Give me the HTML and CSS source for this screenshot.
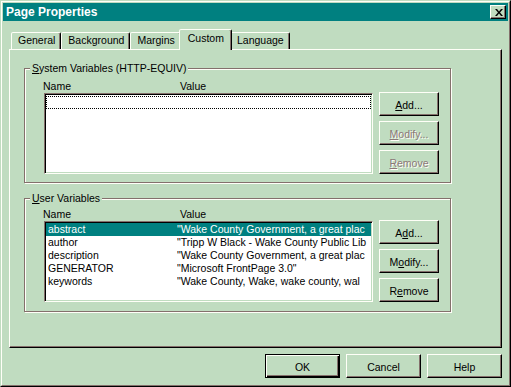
FILE: index.html
```html
<!DOCTYPE html>
<html lang="en">
<head>
  <meta charset="UTF-8" />
  <title>Page Properties</title>
  <link rel="stylesheet" href="styles.css">
</head>
<body>

<div class="window">
  <div class="frame">
    <!-- Title bar -->
    <div class="titlebar">
      <span class="title">Page Properties</span>
      <button class="close-btn">
        <svg width="8" height="7" viewBox="0 0 8 7"><path d="M0 0h2l2 2.4L6 0h2L5 3.5 8 7H6L4 4.6 2 7H0l3-3.5z" fill="#000"/></svg>
      </button>
    </div>

    <!-- Tabs -->
    <div class="tabs">
      <div class="tab">General</div>
      <div class="tab">Background</div>
      <div class="tab">Margins</div>
      <div class="tab active">Custom</div>
      <div class="tab">Language</div>
    </div>

    <div class="tab-panel">
      <!-- System variables -->
      <div class="group group-system">
        <span class="group-label"><u>S</u>ystem Variables (HTTP-EQUIV)</span>
        <div class="group-body">
          <div class="col-head"><span>Name</span><span>Value</span></div>
          <div class="listbox">
            <div class="row focus"></div>
          </div>
          <div class="side-buttons">
            <button class="btn"><u>A</u>dd...</button>
            <button class="btn disabled"><u>M</u>odify...</button>
            <button class="btn disabled"><u>R</u>emove</button>
          </div>
        </div>
      </div>

      <!-- User variables -->
      <div class="group group-user">
        <span class="group-label"><u>U</u>ser Variables</span>
        <div class="group-body">
          <div class="col-head"><span>Name</span><span>Value</span></div>
          <div class="listbox">
            <div class="row selected"><span>abstract</span><span>"Wake County Government, a great plac</span></div>
            <div class="row"><span>author</span><span>"Tripp W Black - Wake County Public Lib</span></div>
            <div class="row"><span>description</span><span>"Wake County Government, a great plac</span></div>
            <div class="row"><span>GENERATOR</span><span>"Microsoft FrontPage 3.0"</span></div>
            <div class="row"><span>keywords</span><span>"Wake County, Wake, wake county, wal</span></div>
          </div>
          <div class="side-buttons">
            <button class="btn">A<u>d</u>d...</button>
            <button class="btn">M<u>o</u>dify...</button>
            <button class="btn">R<u>e</u>move</button>
          </div>
        </div>
      </div>
    </div>

    <!-- Dialog buttons -->
    <div class="dialog-buttons">
      <button class="btn wide default">OK</button>
      <button class="btn wide">Cancel</button>
      <button class="btn wide">Help</button>
    </div>
  </div>
</div>

</body>
</html>
```

FILE: styles.css
```css
/* Base */
* { margin: 0; padding: 0; box-sizing: border-box; }
body {
  font-family: "Liberation Sans", Arial, sans-serif;
  font-size: 10.5px;
  color: #000;
  background: #c0dcc0;
}

/* Window frame */
.window {
  width: 511px;
  height: 387px;
  background: #c0dcc0;
  border: 1px solid;
  border-color: #c0dcc0 #000 #000 #c0dcc0;
}

.frame {
  height: 100%;
  display: flex;
  flex-direction: column;
  border: 1px solid;
  border-color: #fffff8 #84706c #84706c #fffff8;
  padding: 1px;
}

/* Title bar */
.titlebar {
  height: 18px;
  background: #008080;
  display: flex;
  align-items: center;
  justify-content: space-between;
  padding: 0 2px 0 2px;
}

.title {
  color: #fff;
  font-weight: bold;
  font-size: 12px;
  padding-left: 1px;
}

.close-btn {
  width: 16px;
  height: 14px;
  background: #c0dcc0;
  border: 1px solid;
  border-color: #fffff8 #000 #000 #fffff8;
  box-shadow: inset -1px -1px 0 #84706c;
  display: flex;
  align-items: center;
  justify-content: center;
}

.close-btn svg { display: block; margin-left: 1px; }

/* Tabs */
.tabs {
  display: flex;
  align-items: flex-end;
  height: 20px;
  margin-top: 8px;
  padding-left: 8px;
}

.tab {
  height: 17px;
  line-height: 15px;
  padding: 0 5px 0 6px;
  border: 1px solid;
  border-bottom: none;
  border-color: #fffff8 #000 transparent #fffff8;
  border-radius: 2px 2px 0 0;
  box-shadow: inset -1px 0 0 #84706c;
  background: #c0dcc0;
  white-space: nowrap;
}

.tab.active {
  position: relative;
  z-index: 1;
  height: 21px;
  margin: 0 -2px -1px;
  padding: 0 7px 0 8px;
  line-height: 16px;
}

/* Panel */
.tab-panel {
  height: 299px;
  margin: 0 6px;
  padding: 18px 0 0 14px;
  border: 1px solid;
  border-color: #fffff8 #000 #000 #fffff8;
  box-shadow: inset -1px -1px 0 #84706c;
}

/* Group boxes */
.group {
  position: relative;
  width: 427px;
  border: 1px solid #84706c;
  box-shadow: inset 1px 1px 0 #fffff8, 1px 1px 0 #fffff8;
}

.group-system { height: 115px; padding: 11px 0 0 19px; }
.group-user { height: 114px; padding: 9px 0 0 19px; margin-top: 15px; }

.group-label {
  position: absolute;
  top: -7px;
  left: 5px;
  padding: 0 2px;
  line-height: 13px;
  background: #c0dcc0;
}

.group-body {
  display: grid;
  grid-template-columns: 329px 60px;
  grid-template-rows: 13px 81px;
  column-gap: 6px;
}

.col-head {
  grid-column: 1 / 3;
  display: grid;
  grid-template-columns: 137px 1fr;
  margin-left: -1px;
  line-height: 13px;
}

/* List boxes */
.listbox {
  background: #fff;
  border: 1px solid;
  border-color: #84706c #fffff8 #fffff8 #84706c;
  box-shadow: inset 1px 1px 0 #000, inset -1px -1px 0 #c0dcc0;
  padding: 1px;
  overflow: hidden;
}

.row {
  display: grid;
  grid-template-columns: 129px 1fr;
  height: 13px;
  line-height: 13px;
  padding-left: 2px;
  white-space: nowrap;
  overflow: hidden;
}

.row span { overflow: hidden; }

.row.focus { border: 1px dotted #000; margin-top: 1px; height: 13px; }

.row.selected { background: #008080; color: #fff; }

/* Buttons */
.side-buttons {
  display: flex;
  flex-direction: column;
  gap: 5px;
  margin-top: -1px;
}

.btn {
  font-family: inherit;
  font-size: inherit;
  color: #000;
  width: 60px;
  height: 24px;
  background: #c0dcc0;
  border: 1px solid;
  border-color: #fffff8 #000 #000 #fffff8;
  box-shadow: inset -1px -1px 0 #84706c;
  padding-top: 1px;
}

.btn.disabled {
  color: #8c7878;
  text-shadow: 1px 1px 0 #fffff8;
}

.dialog-buttons {
  display: flex;
  justify-content: flex-end;
  gap: 6px;
  margin-top: 6px;
  padding-right: 6px;
}

.btn.wide { width: 75px; }

.btn.default {
  border-color: #000;
  box-shadow: inset 1px 1px 0 #fffff8, inset -1px -1px 0 #000, inset -2px -2px 0 #84706c;
}
```
